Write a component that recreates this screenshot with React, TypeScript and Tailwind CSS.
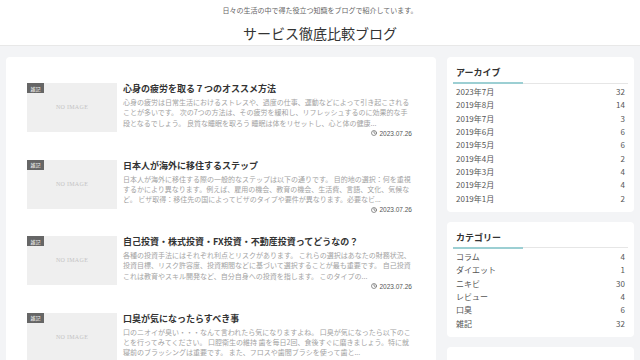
import { Clock } from 'lucide-react'

type Article = {
  title: string
  lines: string[]
  date: string
}

const articles: Article[] = [
  {
    title: '心身の疲労を取る７つのオススメ方法',
    lines: [
      '心身の疲労は日常生活におけるストレスや、過度の仕事、運動などによって引き起こされる',
      'ことが多いです。 次の7つの方法は、その疲労を緩和し、リフレッシュするのに効果的な手',
      '段となるでしょう。 良質な睡眠を取ろう 睡眠は体をリセットし、心と体の健康...',
    ],
    date: '2023.07.26',
  },
  {
    title: '日本人が海外に移住するステップ',
    lines: [
      '日本人が海外に移住する際の一般的なステップは以下の通りです。 目的地の選択：何を重視',
      'するかにより異なります。例えば、雇用の機会、教育の機会、生活費、言語、文化、気候な',
      'ど。 ビザ取得：移住先の国によってビザのタイプや要件が異なります。必要なビ...',
    ],
    date: '2023.07.26',
  },
  {
    title: '自己投資・株式投資・FX投資・不動産投資ってどうなの？',
    lines: [
      '各種の投資手法にはそれぞれ利点とリスクがあります。 これらの選択はあなたの財務状況、',
      '投資目標、リスク許容度、投資期間などに基づいて選択することが最も重要です。 自己投資',
      'これは教育やスキル開発など、自分自身への投資を指します。 このタイプの...',
    ],
    date: '2023.07.26',
  },
  {
    title: '口臭が気になったらすべき事',
    lines: [
      '口のニオイが臭い・・・なんて言われたら気になりますよね。 口臭が気になったら以下のこ',
      'とを行ってみてください。 口腔衛生の維持 歯を毎日2回、食後すぐに磨きましょう。特に就',
      '寝前のブラッシングは重要です。 また、フロスや歯間ブラシを使って歯と...',
    ],
    date: '2023.07.26',
  },
]

const archives: [string, number][] = [
  ['2023年7月', 32],
  ['2019年8月', 14],
  ['2019年7月', 3],
  ['2019年6月', 6],
  ['2019年5月', 6],
  ['2019年4月', 2],
  ['2019年3月', 4],
  ['2019年2月', 4],
  ['2019年1月', 2],
]

const categories: [string, number][] = [
  ['コラム', 4],
  ['ダイエット', 1],
  ['ニキビ', 30],
  ['レビュー', 4],
  ['口臭', 6],
  ['雑記', 32],
]

function ArticleCard({ article }: { article: Article }) {
  return (
    <article className="flex h-[76.5px] items-start gap-[6px]">
      <div className="relative flex h-[49px] w-[90px] shrink-0 items-center justify-center bg-[#efefef]">
        <span className="absolute left-0 top-0 flex h-[10px] w-[17px] items-center justify-center bg-[#666] text-[5px] leading-none text-white">
          雑記
        </span>
        <span className="font-['Liberation_Serif',serif] text-[6px] tracking-[0.3px] text-[#c4c4c4]">NO IMAGE</span>
      </div>
      <div className="-mt-[1px] flex min-w-0 flex-1 flex-col">
        <h2 className="whitespace-nowrap text-[9px] font-bold leading-[14px] text-[#333]">{article.title}</h2>
        <div className="mt-[1px] text-[7px] leading-[10.3px] text-[#a3a3a3]">
          {article.lines.map((line) => (
            <p key={line} className="whitespace-nowrap">{line}</p>
          ))}
        </div>
        <div className="mt-[1px] flex items-center justify-end gap-[2px] text-[6.5px] leading-[9px] text-[#555]">
          <Clock size={6} strokeWidth={2.5} />
          <span className="font-['Liberation_Sans',sans-serif]">{article.date}</span>
        </div>
      </div>
    </article>
  )
}

function Widget({ title, items }: { title: string; items: [string, number][] }) {
  return (
    <section className="rounded-[4px] bg-white px-[6px] pb-[7px] pt-[10px]">
      <h3 className="px-[3px] text-[9px] font-bold leading-[12px] text-[#333]">{title}</h3>
      <div className="relative mt-[3px] h-[2px]">
        <div className="absolute inset-x-0 top-[0.5px] h-px bg-[#e6e6e6]" />
        <div className="absolute left-0 top-0 h-[2px] w-[70px] bg-[#9ccfd3]" />
      </div>
      <ul className="mt-[1px]">
        {items.map(([name, count]) => (
          <li key={name} className="flex justify-between px-[3px] text-[8px] leading-[13.33px] text-[#555]">
            <span>{name}</span>
            <span>{count}</span>
          </li>
        ))}
      </ul>
    </section>
  )
}

export default function App() {
  return (
    <div className="min-h-screen bg-[#f3f4f6] font-['Noto_Sans_CJK_JP',sans-serif] text-[#333]">
      <header className="flex h-[46px] flex-col items-center border-b border-[#e8e8e8] bg-white">
        <p className="mt-[5.5px] text-[7px] leading-[9px] text-[#666]">日々の生活の中で得た役立つ知識をブログで紹介しています。</p>
        <h1 className="mt-[8.5px] text-[14px] leading-[20px] text-[#333]">サービス徹底比較ブログ</h1>
      </header>

      <div className="flex gap-[11px] px-[6px] pt-[11px]">
        <main className="w-[430px] shrink-0 rounded-[4px] bg-white pl-[21px] pr-[24px] pt-[26px]">
          {articles.map((a) => (
            <ArticleCard key={a.title} article={a} />
          ))}
        </main>

        <aside className="flex flex-1 flex-col gap-[10px]">
          <Widget title="アーカイブ" items={archives} />
          <Widget title="カテゴリー" items={categories} />
          <section className="h-[40px] rounded-[4px] bg-white" />
        </aside>
      </div>
    </div>
  )
}
